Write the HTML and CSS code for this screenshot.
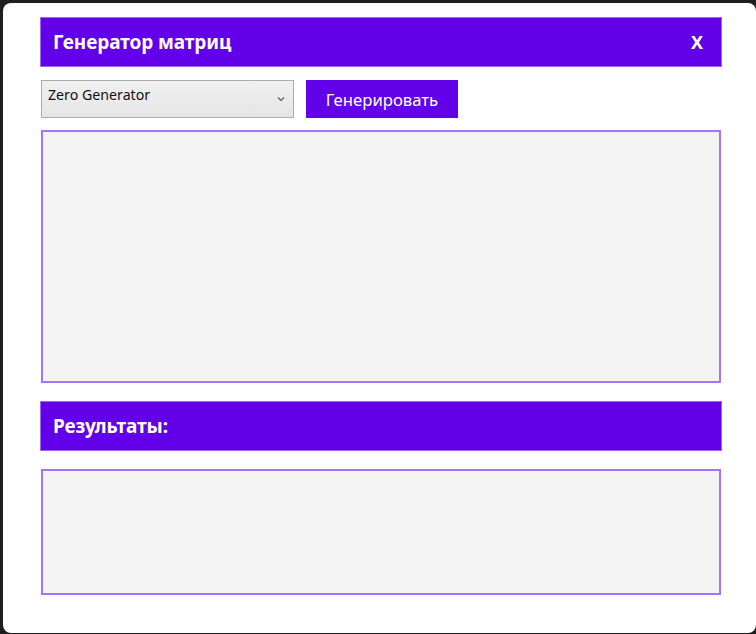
FILE: index.html
```html
<!DOCTYPE html>
<html lang="ru">
<head>
<meta charset="utf-8">
<title>Генератор матриц</title>
<link rel="stylesheet" href="styles.css">
</head>
<body>
<div class="window">
  <div class="bar">
    <span class="bar-title">Генератор матриц</span>
    <span class="close">X</span>
  </div>
  <div class="controls">
    <div class="combo">
      <span class="combo-text">Zero Generator</span>
      <svg class="chev" width="8" height="6" viewBox="0 0 8 6"><path d="M1 1.5 L4 4.5 L7 1.5" fill="none" stroke="#555" stroke-width="1.1"/></svg>
    </div>
    <button class="gen">Генерировать</button>
  </div>
  <div class="box box-main"></div>
  <div class="bar bar-results">
    <span class="bar-title">Результаты:</span>
  </div>
  <div class="box box-results"></div>
</div>
</body>
</html>
```
FILE: styles.css
```css
html, body {
  margin: 0;
  padding: 0;
  background: #1e1e1e;
  width: 756px;
  height: 634px;
  overflow: hidden;
}
body {
  padding: 3px 0 0 3px;
  box-sizing: border-box;
  font-family: "Noto Sans", "Open Sans", sans-serif;
}
.window {
  width: 753px;
  height: 630px;
  background: #fff;
  border-radius: 8px;
  box-sizing: border-box;
  padding: 14px 0 0 37px;
  display: flex;
  flex-direction: column;
  align-items: flex-start;
}
.bar {
  width: 682px;
  height: 50px;
  box-sizing: border-box;
  background: #6200ea;
  border: 1px solid #9a66f2;
  display: flex;
  align-items: center;
  justify-content: space-between;
  padding: 0 18px 0 12px;
  color: #fff;
}
.bar-title {
  font-weight: bold;
  font-size: 19px;
  letter-spacing: -0.1px;
}
.close {
  font-weight: bold;
  font-size: 18px;
}
.controls {
  display: flex;
  gap: 12px;
  margin: 13px 0 0 1px;
}
.combo {
  width: 253px;
  height: 38px;
  box-sizing: border-box;
  border: 1px solid #acacac;
  background: linear-gradient(#f0f0f0, #e5e5e5);
  display: flex;
  align-items: flex-start;
  justify-content: space-between;
  padding: 5px 8px 0 6px;
}
.combo-text {
  font-size: 14.2px;
  color: #111;
  line-height: 18px;
}
.chev {
  margin-top: 10px;
}
.gen {
  width: 152px;
  height: 38px;
  border: none;
  background: #6200ea;
  color: #fff;
  font-family: "Noto Sans", "Open Sans", sans-serif;
  font-size: 16.7px;
  padding: 0;
}
.box {
  width: 680px;
  box-sizing: border-box;
  background: #f3f3f3;
  border: 2px solid #a274f6;
  margin-left: 1px;
}
.box-main {
  height: 253px;
  margin-top: 12px;
}
.bar-results {
  margin-top: 18px;
}
.box-results {
  height: 126px;
  margin-top: 18px;
}
```
